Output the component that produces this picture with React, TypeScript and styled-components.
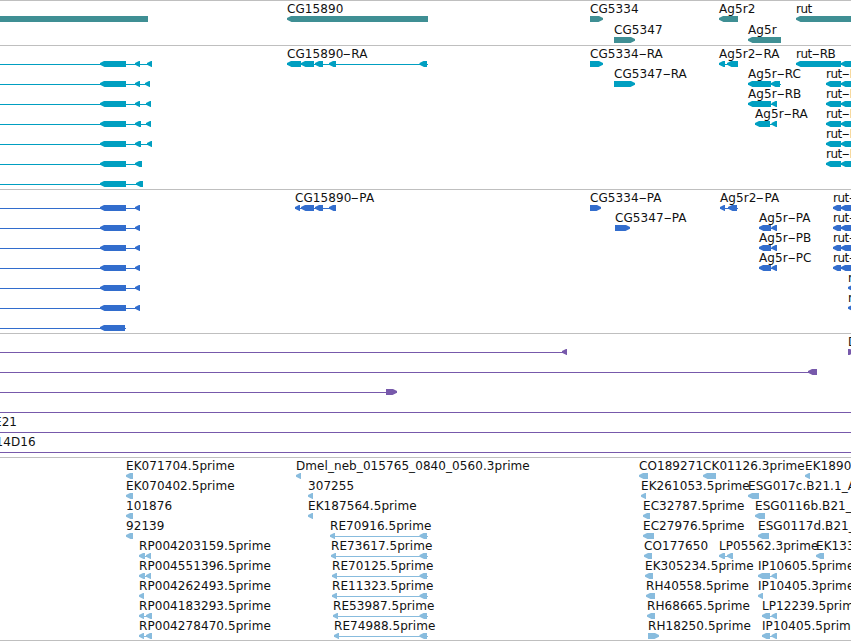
import { Fragment } from 'react';
import styled, { createGlobalStyle } from 'styled-components';

type Direction = 'left' | 'right';

interface FeatureData {
    start: number;
    end: number;
    label?: string;
    blocks?: [number, number][];
    direction?: Direction;
    // distance the label is shifted from the start of the feature
    labelShift?: number;
}

interface TrackData {
    name: string;
    color: string;
    height: number;
    rowHeight: number;
    rows: FeatureData[][];
}

const LineColor = '#bfbfbf';
const HeadLength = 5;

const feature = (
    start: number,
    end: number,
    label?: string,
    blocks?: [number, number][],
    direction: Direction = 'left'
): FeatureData => ({ start, end, label, blocks, direction });

const genes: FeatureData[][] = [
    [
        feature(-20, 148),
        feature(287, 428, 'CG15890'),
        feature(590, 603, 'CG5334', undefined, 'right'),
        feature(719, 738, 'Ag5r2'),
        feature(796, 880, 'rut'),
    ],
    [
        feature(614, 635, 'CG5347', undefined, 'right'),
        feature(748, 781, 'Ag5r'),
    ],
];

const longTranscript = (...tail: [number, number][]) =>
    feature(-20, tail[tail.length - 1][1], undefined, [[100, 126], ...tail]);

const rutTranscript = (label: string) =>
    feature(826, 870, label, [
        [826, 841],
        [841, 862],
    ]);

const transcripts: FeatureData[][] = [
    [
        longTranscript([135, 140], [147, 152]),
        feature(287, 428, 'CG15890-RA', [
            [287, 301],
            [301, 314],
            [315, 323],
            [329, 336],
            [419.5, 427],
        ]),
        feature(590, 603, 'CG5334-RA', undefined, 'right'),
        feature(719, 738, 'Ag5r2-RA', [
            [719, 725],
            [727, 738],
        ]),
        feature(796, 870, 'rut-RB', [
            [796, 841],
            [841, 862],
        ]),
    ],
    [
        longTranscript([135, 140], [145, 150]),
        feature(614, 635, 'CG5347-RA', undefined, 'right'),
        feature(748, 781, 'Ag5r-RC', [
            [748, 771],
            [771, 780],
        ]),
        rutTranscript('rut-RF'),
    ],
    [
        longTranscript([135, 140], [146, 151]),
        feature(748, 777, 'Ag5r-RB', [
            [748, 771],
            [771.5, 777],
        ]),
        rutTranscript('rut-RE'),
    ],
    [
        longTranscript([135, 141], [146, 151]),
        feature(755, 777, 'Ag5r-RA', [
            [755, 770],
            [771.5, 777],
        ]),
        rutTranscript('rut-RD'),
    ],
    [longTranscript([135, 141], [147, 152]), rutTranscript('rut-RC')],
    [longTranscript([135, 142]), rutTranscript('rut-RA')],
    [longTranscript([136, 143])],
];

const ag5rProtein = (label: string) =>
    feature(759, 777, label, [
        [759, 771],
        [771.5, 777],
    ]);

const rutProtein = (label: string) =>
    feature(833, 870, label, [
        [833, 841],
        [841, 862],
    ]);

const proteins: FeatureData[][] = [
    [
        longTranscript([135, 140]),
        feature(295, 336, 'CG15890-PA', [
            [295, 300],
            [301, 314],
            [315, 323],
            [329, 336],
        ]),
        feature(590, 601, 'CG5334-PA', undefined, 'right'),
        feature(720, 738, 'Ag5r2-PA', [
            [720, 725],
            [728, 737],
        ]),
        rutProtein('rut-PB'),
    ],
    [
        longTranscript([135, 140]),
        feature(615, 630, 'CG5347-PA', undefined, 'right'),
        ag5rProtein('Ag5r-PA'),
        rutProtein('rut-PF'),
    ],
    [
        longTranscript([135, 140]),
        ag5rProtein('Ag5r-PB'),
        rutProtein('rut-PE'),
    ],
    [
        longTranscript([135, 140]),
        ag5rProtein('Ag5r-PC'),
        rutProtein('rut-PD'),
    ],
    [longTranscript([135, 140]), feature(848, 870, 'rut-PC')],
    [longTranscript([135, 140]), feature(848, 870, 'rut-PA')],
    [feature(-20, 126, undefined, [[100, 125]])],
];

const insertions: FeatureData[][] = [
    [
        feature(-20, 567, undefined, [[562, 567]]),
        feature(848, 854, 'Df', undefined, 'right'),
    ],
    [feature(-20, 817, undefined, [[808, 817]])],
    [feature(-20, 397, undefined, [[386, 397]], 'right')],
    [feature(-20, 880, undefined, [])],
    [{ ...feature(-20, 880, 'E21', []), labelShift: 14 }],
    [{ ...feature(-20, 880, '14D16', []), labelShift: 15.5 }],
];

const reTranscript = (start: number, label: string) =>
    feature(start, 428, label, [
        [start, start + 5],
        [419.5, 427],
    ]);

const ests: FeatureData[][] = [
    [
        feature(126, 133, 'EK071704.5prime'),
        feature(296, 301, 'Dmel_neb_015765_0840_0560.3prime'),
        feature(639, 648, 'CO189271'),
        feature(703, 716, 'CK01126.3prime'),
        feature(805, 810, 'EK189011.5prime'),
    ],
    [
        feature(126, 133, 'EK070402.5prime'),
        feature(308, 313, '307255'),
        feature(641, 646, 'EK261053.5prime'),
        feature(748, 759, 'ESG017c.B21.1_A'),
    ],
    [
        feature(126, 133, '101876'),
        feature(308, 313, 'EK187564.5prime'),
        feature(643, 650, 'EC32787.5prime'),
        feature(755, 765, 'ESG0116b.B21_A'),
    ],
    [
        feature(126, 133, '92139'),
        reTranscript(330, 'RE70916.5prime'),
        feature(643, 654, 'EC27976.5prime'),
        feature(758, 769, 'ESG0117d.B21_A'),
    ],
    [
        feature(139, 151, 'RP004203159.5prime', [
            [139, 145],
            [146, 151],
        ]),
        reTranscript(331, 'RE73617.5prime'),
        feature(644, 652, 'CO177650'),
        feature(719, 733, 'LP05562.3prime', [
            [719, 725],
            [727, 733],
        ]),
        feature(816, 824, 'EK133011.5prime'),
    ],
    [
        feature(139, 151, 'RP004551396.5prime', [
            [139, 145],
            [146, 151],
        ]),
        reTranscript(332, 'RE70125.5prime'),
        feature(645, 653, 'EK305234.5prime'),
        feature(758, 777, 'IP10605.5prime', [
            [758, 770],
            [771.5, 777],
        ]),
    ],
    [
        feature(139, 144, 'RP004262493.5prime'),
        reTranscript(332, 'RE11323.5prime'),
        feature(646, 655, 'RH40558.5prime'),
        feature(758, 763, 'IP10405.3prime'),
    ],
    [
        feature(139, 152, 'RP004183293.5prime', [
            [139, 144],
            [146, 152],
        ]),
        reTranscript(333, 'RE53987.5prime'),
        feature(647, 655, 'RH68665.5prime'),
        feature(762, 777, 'LP12239.5prime', [
            [762, 770],
            [771.5, 777],
        ]),
    ],
    [
        feature(139, 152, 'RP004278470.5prime', [
            [139, 144],
            [146, 152],
        ]),
        reTranscript(334, 'RE74988.5prime'),
        feature(648, 659, 'RH18250.5prime', undefined, 'right'),
        feature(762, 777, 'IP10405.5prime', [
            [762, 770],
            [771.5, 777],
        ]),
    ],
];

const tracks: TrackData[] = [
    { name: 'genes', color: '#3f8f94', height: 45, rowHeight: 21, rows: genes },
    {
        name: 'transcripts',
        color: '#009fc1',
        height: 144,
        rowHeight: 20,
        rows: transcripts,
    },
    {
        name: 'proteins',
        color: '#326dcd',
        height: 144,
        rowHeight: 20,
        rows: proteins,
    },
    {
        name: 'insertions',
        color: '#7759ab',
        height: 124,
        rowHeight: 20,
        rows: insertions,
    },
    { name: 'ests', color: '#88bcde', height: 183, rowHeight: 20, rows: ests },
];

// A block is a bar with a pointed head on the side it is read towards
const blockPoints = (from: number, to: number, direction: Direction) => {
    const head = Math.min(HeadLength, to - from);
    if (direction === 'left') {
        const neck = from + head;
        return `${from},2 ${neck - 1},0 ${to},0 ${to},6 ${neck - 0.5},6 ${from},3.8`;
    }
    const neck = to - head;
    return `${from},0 ${neck + 1},0 ${to},2 ${to},3.8 ${neck + 0.5},6 ${from},6`;
};

const Feature = ({
    start,
    end,
    label = '',
    blocks,
    direction = 'left',
    labelShift = 0,
}: FeatureData) => {
    const spans = blocks ?? [[start, end]];

    return (
        <FeatureWrapper $start={start}>
            <Label $shift={labelShift} $tight={label.startsWith('rut')}>
                {label.split('-').map((part, index) => (
                    <Fragment key={index}>
                        {index > 0 && <Hyphen>-</Hyphen>}
                        {part}
                    </Fragment>
                ))}
            </Label>
            <Glyph width={end - start} height={6}>
                {blocks && (
                    <rect
                        x={0}
                        y={3}
                        width={end - start}
                        height={1}
                        shapeRendering="crispEdges"
                    />
                )}
                {spans.map(([from, to]) => (
                    <polygon
                        key={from}
                        points={blockPoints(from - start, to - start, direction)}
                    />
                ))}
            </Glyph>
        </FeatureWrapper>
    );
};

const App = () => {
    return (
        <>
            <GlobalStyle />
            <Browser>
                {tracks.map((track) => (
                    <Track
                        key={track.name}
                        $color={track.color}
                        $height={track.height}
                    >
                        {track.rows.map((row, index) => (
                            <Row key={index} $height={track.rowHeight}>
                                {row.map((item) => (
                                    <Feature key={item.start} {...item} />
                                ))}
                            </Row>
                        ))}
                    </Track>
                ))}
            </Browser>
        </>
    );
};

const GlobalStyle = createGlobalStyle`
    body {
        margin: 0;
        background-color: #fff;
        overflow: hidden;
    }
`;

const Browser = styled.main`
    display: flex;
    flex-direction: column;
    box-sizing: border-box;
    width: 851px;
    height: 641px;
    overflow: hidden;
    border-bottom: 1px solid ${LineColor};
    font-family: 'DejaVu Sans', sans-serif;
    font-size: 12px;
`;

const Track = styled.section<{ $color: string; $height: number }>`
    flex: none;
    box-sizing: border-box;
    height: ${(props) => props.$height}px;
    border-top: 1px solid ${LineColor};
    fill: ${(props) => props.$color};
`;

const Row = styled.div<{ $height: number }>`
    position: relative;
    height: ${(props) => props.$height}px;
`;

const FeatureWrapper = styled.div<{ $start: number }>`
    position: absolute;
    top: 0;
    left: ${(props) => props.$start}px;
    display: flex;
    flex-direction: column;
`;

const Label = styled.span<{ $shift: number; $tight: boolean }>`
    height: 15px;
    padding-left: ${(props) => props.$shift}px;
    line-height: 17px;
    letter-spacing: ${(props) => (props.$tight ? '-0.5px' : '0.07px')};
    color: #111;
    white-space: nowrap;
`;

const Hyphen = styled.span`
    display: inline-block;
    width: 8px;
    letter-spacing: 0;
    text-indent: -0.3px;
    transform: scaleX(1.95);
    transform-origin: 0 50%;
`;

const Glyph = styled.svg`
    display: block;
    overflow: visible;
`;

export default App;
